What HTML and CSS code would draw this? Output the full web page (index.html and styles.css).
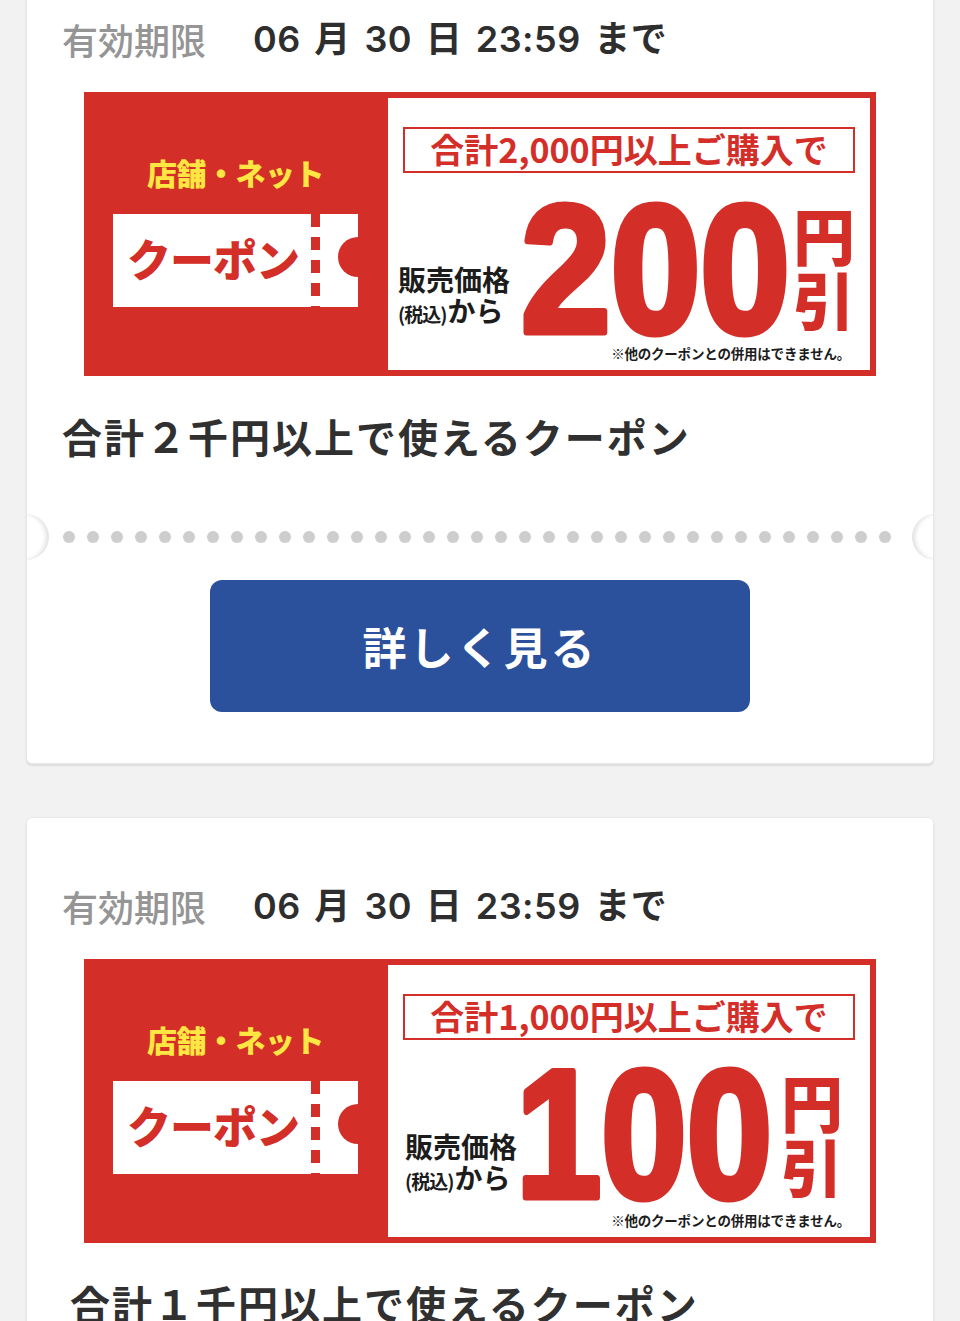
FILE: index.html
```html
<!DOCTYPE html>
<html lang="ja">
<head>
<meta charset="utf-8">
<title>クーポン</title>
<link rel="stylesheet" href="styles.css">
</head>
<body>
<div class="list">
  <section class="card">
    <div class="expiry">
      <span class="expiry-label">有効期限</span>
      <span class="expiry-date">06 月 30 日 23:59 まで</span>
    </div>
    <div class="banner">
      <div class="banner-left">
        <div class="banner-tag">店舗・ネット</div>
        <div class="ticket">
          <span class="ticket-text">クーポン</span>
          <span class="ticket-dash"></span>
        </div>
      </div>
      <div class="banner-right">
        <div class="cond">合計2,000円以上ご購入で</div>
        <div class="deal">
          <div class="deal-label">
            <div class="deal-label-top">販売価格</div>
            <div class="deal-label-bottom"><span class="tax">(税込)</span>から</div>
          </div>
          <svg class="bignum" width="275" height="140" viewBox="0 0 275 140"><text x="3" y="134" textLength="269" lengthAdjust="spacingAndGlyphs">200</text></svg>
          <div class="yen"><span>円</span><span>引</span></div>
        </div>
        <div class="note">※他のクーポンとの併用はできません。</div>
      </div>
    </div>
    <h2 class="title">合計２千円以上で使えるクーポン</h2>
    <div class="separator">
      <span class="dot"></span><span class="dot"></span><span class="dot"></span><span class="dot"></span><span class="dot"></span><span class="dot"></span><span class="dot"></span><span class="dot"></span><span class="dot"></span><span class="dot"></span><span class="dot"></span><span class="dot"></span><span class="dot"></span><span class="dot"></span><span class="dot"></span><span class="dot"></span><span class="dot"></span><span class="dot"></span><span class="dot"></span><span class="dot"></span><span class="dot"></span><span class="dot"></span><span class="dot"></span><span class="dot"></span><span class="dot"></span><span class="dot"></span><span class="dot"></span><span class="dot"></span><span class="dot"></span><span class="dot"></span><span class="dot"></span><span class="dot"></span><span class="dot"></span><span class="dot"></span><span class="dot"></span>
    </div>
    <a class="button" href="#">詳しく見る</a>
  </section>

  <section class="card">
    <div class="expiry">
      <span class="expiry-label">有効期限</span>
      <span class="expiry-date">06 月 30 日 23:59 まで</span>
    </div>
    <div class="banner">
      <div class="banner-left">
        <div class="banner-tag">店舗・ネット</div>
        <div class="ticket">
          <span class="ticket-text">クーポン</span>
          <span class="ticket-dash"></span>
        </div>
      </div>
      <div class="banner-right">
        <div class="cond">合計1,000円以上ご購入で</div>
        <div class="deal deal-alt">
          <div class="deal-label">
            <div class="deal-label-top">販売価格</div>
            <div class="deal-label-bottom"><span class="tax">(税込)</span>から</div>
          </div>
          <svg class="bignum" width="262" height="140" viewBox="0 0 262 140"><text x="3" y="132" textLength="256" lengthAdjust="spacingAndGlyphs">100</text></svg>
          <div class="yen"><span>円</span><span>引</span></div>
        </div>
        <div class="note">※他のクーポンとの併用はできません。</div>
      </div>
    </div>
    <h2 class="title title-alt">合計１千円以上で使えるクーポン</h2>
  </section>
</div>
</body>
</html>
```

FILE: styles.css
```css
* { box-sizing: border-box; }

html, body {
  margin: 0;
  padding: 0;
  background: #f2f2f2;
}

body {
  font-family: "Noto Sans CJK JP", "Noto Sans", sans-serif;
  color: #333;
}

.list {
  display: flex;
  flex-direction: column;
  gap: 53px;
  margin-top: -50px;
  padding: 0 26px;
}

.card {
  background: #fff;
  border: 1px solid #e8e8e8;
  border-radius: 6px;
  box-shadow: 0 2px 2px rgba(0, 0, 0, 0.09);
  padding: 63px 35px 51px;
  overflow: hidden;
}

.expiry {
  display: flex;
  align-items: center;
  gap: 47px;
  height: 50px;
  font-size: 36px;
  font-weight: 500;
  line-height: 50px;
}

.expiry-label {
  color: #959595;
}

.expiry-date {
  font-family: Inter, "Noto Sans CJK JP", sans-serif;
  color: #2e2e2e;
  font-weight: 600;
  word-spacing: 4px;
  letter-spacing: 0.5px;
}

/* banner */
.banner {
  width: 792px;
  height: 284px;
  margin: 28px auto 0;
  background: #d42e28;
  display: flex;
  padding: 6px 6px 6px 0;
}

.banner-left {
  width: 304px;
  flex: none;
  display: flex;
  flex-direction: column;
  align-items: center;
  padding-top: 58px;
  padding-right: 1px;
}

.banner-tag {
  color: #ffe642;
  font-size: 30px;
  font-weight: 900;
  line-height: 32px;
  letter-spacing: -0.5px;
}

.ticket {
  position: relative;
  margin-top: 26px;
  width: 245px;
  height: 93px;
  background: #fff;
  display: flex;
  align-items: center;
  padding-left: 14px;
}

.ticket::after {
  content: "";
  position: absolute;
  right: -20px;
  top: 23px;
  width: 40px;
  height: 40px;
  border-radius: 50%;
  background: #d42e28;
}

.ticket-text {
  color: #d42e28;
  font-size: 44px;
  font-weight: 900;
  line-height: 44px;
  letter-spacing: -1px;
  margin-top: -6px;
  width: 184px;
}

.ticket-dash {
  width: 9px;
  align-self: stretch;
  background: repeating-linear-gradient(to bottom, #d42e28 0 13px, transparent 13px 23px);
}

.banner-right {
  flex: 1;
  background: #fff;
  padding-top: 29px;
  display: flex;
  flex-direction: column;
}

.cond {
  margin: 0 15px;
  height: 46px;
  border: 2px solid #d42e28;
  color: #d42e28;
  font-size: 34px;
  font-weight: 700;
  line-height: 40px;
  text-align: center;
  letter-spacing: 0;
}

.deal {
  display: flex;
  margin-top: 25px;
  height: 140px;
  padding-left: 10px;
}

.deal-alt {
  padding-left: 17px;
}

.deal-label {
  align-self: flex-end;
  width: 120px;
  margin-bottom: 9px;
  color: #1c1c1c;
  font-weight: 700;
}

.deal-label-top {
  font-size: 28px;
  line-height: 32px;
  letter-spacing: 0;
}

.deal-label-bottom {
  font-size: 28px;
  line-height: 30px;
}

.tax {
  font-size: 19px;
  letter-spacing: -1px;
  margin-right: 1px;
}

.bignum {
  display: block;
  flex: none;
  overflow: visible;
}

.bignum text {
  font-family: "Liberation Sans", Arial, sans-serif;
  font-weight: 700;
  font-size: 182px;
  fill: #d42e28;
  stroke: #d42e28;
  stroke-width: 7px;
  stroke-linejoin: round;
}

.deal-alt .bignum {
  margin-left: -12px;
}

.yen {
  display: flex;
  flex-direction: column;
  margin-top: 4px;
  color: #d42e28;
  font-size: 62px;
  font-weight: 900;
  line-height: 64px;
}

.deal-alt .yen {
  margin-left: 6px;
}

.note {
  margin-top: 7px;
  padding-right: 20px;
  text-align: right;
  color: #1c1c1c;
  font-size: 13.5px;
  font-weight: 700;
  line-height: 16px;
  letter-spacing: -0.2px;
}

/* title */
.title {
  margin: 32px 0 0;
  font-size: 40px;
  font-weight: 700;
  line-height: 56px;
  letter-spacing: 2px;
  color: #303030;
}

.title-alt {
  padding-left: 8px;
}

/* separator */
.separator {
  position: relative;
  margin: 50px -35px 0;
  height: 46px;
  display: flex;
  align-items: center;
  justify-content: center;
  gap: 12px;
  padding-right: 6px;
}

.separator::before,
.separator::after {
  content: "";
  position: absolute;
  top: 0;
  width: 46px;
  height: 46px;
  border-radius: 50%;
  background: #fff;
}

.separator::before {
  left: -24px;
  box-shadow: inset -4px 0 4px -1px rgba(0, 0, 0, 0.12);
}

.separator::after {
  right: -25px;
  box-shadow: inset 4px 0 4px -1px rgba(0, 0, 0, 0.12);
}

.dot {
  width: 12px;
  height: 12px;
  border-radius: 50%;
  background: #cdcdcd;
  flex: none;
}

/* button */
.button {
  display: flex;
  align-items: center;
  justify-content: center;
  width: 540px;
  height: 132px;
  margin: 20px auto 0;
  background: #2c519c;
  border-radius: 12px;
  color: #fff;
  text-decoration: none;
  font-size: 44px;
  font-weight: 700;
  letter-spacing: 3px;
}
```
